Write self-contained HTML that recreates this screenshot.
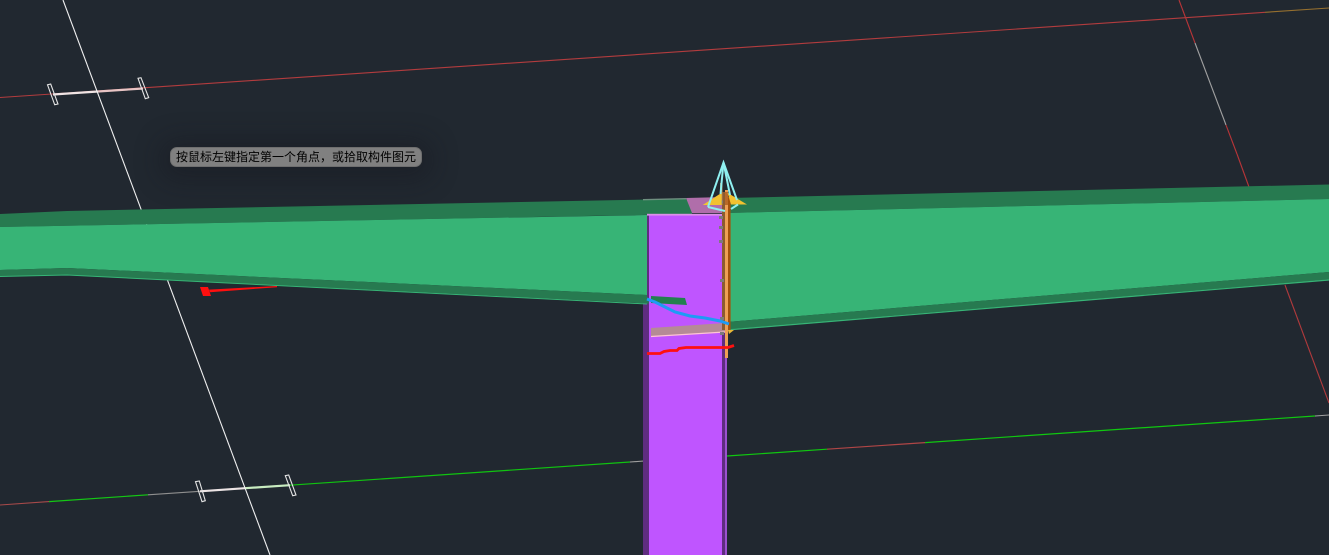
<!DOCTYPE html>
<html lang="zh">
<head>
<meta charset="utf-8">
<title>按鼠标左键指定第一个角点</title>
<style>
html,body{margin:0;padding:0;width:1329px;height:555px;overflow:hidden;background:#212830}
svg{position:absolute;left:0;top:0;display:block}
.tip{position:absolute;left:170px;top:147px;width:252px;height:20px;box-sizing:border-box;background:#808080;border-radius:7px;border:1px solid #6f6f6f;box-shadow:0 3px 26px 10px rgba(20,22,28,.38);color:#000;font:12px/18px "Liberation Sans","Noto Sans CJK SC",sans-serif;text-align:center;white-space:nowrap}
</style>
</head>
<body>
<svg width="1329" height="555" viewBox="0 0 1329 555" xmlns="http://www.w3.org/2000/svg">
<rect width="1329" height="555" fill="#212830"/>

<!-- top red axis line -->
<line x1="0" y1="97.5" x2="1265" y2="12.3" stroke="#b23c3e" stroke-width="1.1"/>
<line x1="1265" y1="12.3" x2="1329" y2="8" stroke="#96702f" stroke-width="1.1"/>
<line x1="53" y1="94.5" x2="98" y2="91.5" stroke="#f0e4e4" stroke-width="2.2"/>
<line x1="98" y1="91.5" x2="143" y2="88.5" stroke="#e8c4c4" stroke-width="2.2"/>

<!-- bottom green axis line -->
<line x1="0" y1="505" x2="49" y2="501.6" stroke="#a84a4a" stroke-width="1.1"/>
<line x1="49" y1="501.6" x2="148" y2="494.8" stroke="#14c814" stroke-width="1.2"/>
<line x1="148" y1="494.8" x2="200" y2="491.3" stroke="#8f8f8f" stroke-width="1.1"/>
<line x1="200" y1="491.3" x2="245" y2="488.2" stroke="#ece4e4" stroke-width="2.2"/>
<line x1="245" y1="488.2" x2="290" y2="485.2" stroke="#c8ecc0" stroke-width="2.2"/>
<line x1="290" y1="485.2" x2="630" y2="462" stroke="#10c410" stroke-width="1.2"/>
<line x1="630" y1="462" x2="644" y2="461" stroke="#a0a0a0" stroke-width="1.1"/>
<line x1="727" y1="456" x2="827" y2="449.2" stroke="#10c810" stroke-width="1.2"/>
<line x1="827" y1="449.2" x2="925" y2="442.6" stroke="#b04646" stroke-width="1.2"/>
<line x1="925" y1="442.6" x2="1315" y2="416" stroke="#10c810" stroke-width="1.2"/>
<line x1="1315" y1="416" x2="1329" y2="415" stroke="#a0a0a0" stroke-width="1.1"/>

<!-- white diagonal -->
<line x1="63" y1="0" x2="270" y2="555" stroke="#f0f0f0" stroke-width="1.1"/>

<!-- tick marks -->
<g fill="none" stroke="#e4e4e4" stroke-width="1.1">
<polygon points="47.5,84.8 50.7,84 58,104 54.7,104.7"/>
<polygon points="138,78.3 141,77.7 148.7,97.7 145.3,98.7"/>
<polygon points="195.5,481.7 199.3,481 205.3,500.7 202,501.7"/>
<polygon points="285.3,475.7 288.7,475 296,495 292.7,495.7"/>
</g>

<!-- right diagonal -->
<g fill="none" stroke-width="1.1">
<line x1="1179" y1="0" x2="1195" y2="43" stroke="#b83538"/>
<line x1="1195" y1="43" x2="1226" y2="125" stroke="#a0a0a0"/>
<line x1="1226" y1="125" x2="1237" y2="154" stroke="#b83538"/>
<line x1="1237" y1="154" x2="1249" y2="187" stroke="#b83538"/>
<line x1="1285" y1="285" x2="1329" y2="403" stroke="#b03a3c"/>
</g>

<!-- column -->
<rect x="643" y="296" width="6" height="259" fill="#5f2d7f"/>
<rect x="649" y="215" width="73" height="340" fill="#bf55ff"/>
<rect x="722" y="215" width="3" height="340" fill="#5f2d7f"/>
<rect x="725" y="330" width="2" height="225" fill="#9c50d0"/>

<!-- left beam -->
<polygon points="0,214 67,211 647,199.5 692,198.6 692,214 0,227" fill="#277a50"/>
<polygon points="0,227 647,215 647,295 67,268 0,270" fill="#37b476"/>
<polygon points="0,270 67,268 647,295 649,303.5 67,275 0,276.5" fill="#277a50"/>
<polyline points="0,276.5 67,275 647,304" fill="none" stroke="#37b476" stroke-width="1"/>
<rect x="647" y="215" width="2" height="82" fill="#5f2d7f"/>

<!-- right beam -->
<polygon points="727,198 1329,184.5 1329,199 727,213" fill="#277a50"/>
<polygon points="727,213 1329,199 1329,272 727,322" fill="#37b476"/>
<polygon points="727,322 1329,272 1329,279.5 727,329.5" fill="#277a50"/>
<polyline points="727,330 1329,280" fill="none" stroke="#37b476" stroke-width="1.2"/>

<!-- top of column -->
<polygon points="686,198 725,197 725,213 692,213" fill="#b06eaa"/>
<polygon points="643,199 686,198 686,199.4 643,200.4" fill="#6f8f80"/>
<rect x="647" y="213.8" width="78" height="1.8" fill="#dc90e8"/>

<!-- green patch on column -->
<polygon points="651,296 685,298 687,305 651,303" fill="#23804f"/>

<!-- tan strip -->
<polygon points="651,328 725,323 725,332 651,336.5" fill="#b58a96"/>
<line x1="651" y1="336.5" x2="725" y2="332" stroke="#ffc4d4" stroke-width="1.2"/>
<polygon points="729,334 734,330 728,330" fill="#e8b838"/>

<!-- orange vertical stripe -->
<rect x="722" y="205" width="3" height="125" fill="#8c5c30"/>
<rect x="725" y="190" width="3" height="168" fill="#ee9f55"/>
<rect x="728" y="197" width="2.6" height="133" fill="#a4520c"/>
<rect x="720" y="183" width="2.5" height="22" fill="#b08050"/>
<rect x="722.5" y="192" width="3" height="13" fill="#8c5c30"/>
<rect x="725" y="192" width="3" height="13" fill="#b86a28"/>

<!-- gray ticks -->
<g fill="#7c7c7c">
<rect x="719" y="200.5" width="4" height="3"/>
<rect x="719" y="216" width="4" height="3"/>
<rect x="719" y="226" width="4" height="3"/>
<rect x="719" y="240" width="4" height="3"/>
<rect x="720" y="279" width="4" height="3"/>
<rect x="720" y="317" width="4" height="3"/>
<rect x="720" y="332" width="4" height="3"/>
</g>

<!-- arrow: yellow fins -->
<polygon points="702.7,205 721.7,192.7 721.7,205" fill="#f2c230"/>
<polygon points="727.5,192.7 747,204.5 731,204.5" fill="#f2c230"/>
<!-- arrow: cyan cone -->
<g fill="none" stroke="#8ff0f0" stroke-width="2" stroke-linejoin="miter">
<polyline points="708,207 723.5,162.5 737,200"/>
<line x1="723.5" y1="162.5" x2="720.5" y2="194"/>
<line x1="723.5" y1="162.5" x2="730" y2="195"/>
<line x1="708" y1="207" x2="725" y2="211"/>
<line x1="731" y1="209" x2="738" y2="204.5"/>
</g>

<!-- blue curve -->
<polyline points="647,299 655,302 665,307 675,312 690,316 705,318 720,321 729,324" fill="none" stroke="#1e9bf5" stroke-width="3"/>

<!-- red polyline on column -->
<polyline points="647,353.5 660,353.5 664,351.5 670,350.5 677,350.5 679,348.5 686,347.5 728,347.5 734,345.5" fill="none" stroke="#ff1010" stroke-width="2.8"/>

<!-- red marker left -->
<polygon points="200,287 208,287 211,296 203,296" fill="#ff0f0f"/>
<polygon points="209,289.6 277,286 277,287.2 210,292.2" fill="#ff0f0f"/>
</svg>
<div class="tip">按鼠标左键指定第一个角点，或拾取构件图元</div>
</body>
</html>
